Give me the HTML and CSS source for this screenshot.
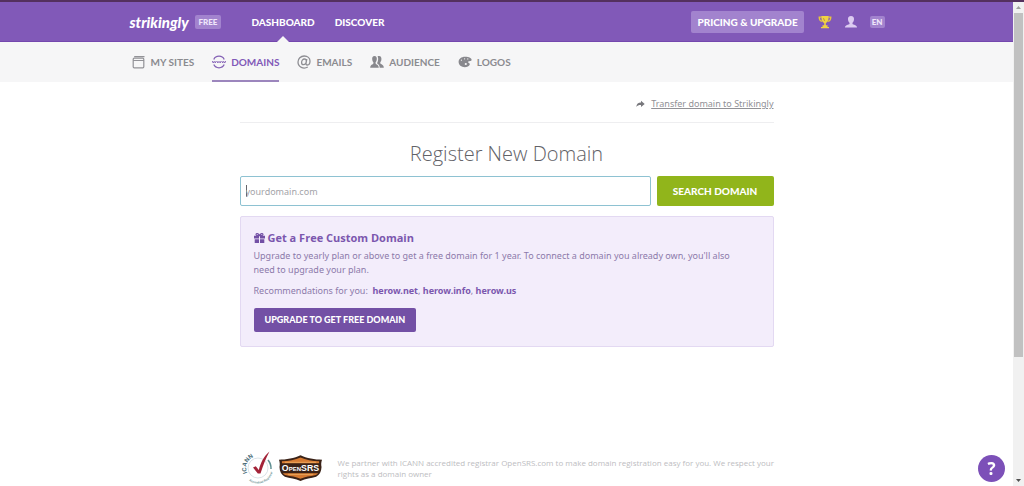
FILE: index.html
```html
<!DOCTYPE html>
<html lang="en">
<head>
<meta charset="utf-8">
<title>Strikingly - Domains</title>
<link rel="stylesheet" href="styles.css">
</head>
<body>
<div class="page">
  <header class="topbar">
    <div class="wrap topbar-row">
      <a class="brand" href="#">strikingly</a>
      <span class="tag plan">FREE</span>
      <nav class="main-nav">
        <a class="current" href="#">DASHBOARD</a>
        <a href="#">DISCOVER</a>
      </nav>
      <div class="account">
        <a class="pricing" href="#">PRICING &amp; UPGRADE</a>
        <a href="#" class="icon-link" aria-label="Rewards"><svg width="14" height="14" viewBox="0 0 14 14"><path d="M3.5 2.2H1.2c0 2.600 1.200 3.800 3 4.200M10.500 2.200h2.300c0 2.600-1.200 3.800-3 4.200" fill="none" stroke="#e8c63c" stroke-width="1.300"/><path d="M3.300 1h7.400c0 4-1 6.300-2.900 7v2.200h1.700V12H11v1.300H3V12h1.500v-1.800h1.700V8C4.300 7.300 3.300 5 3.300 1z" fill="#f0d242"/><path d="M5.500 3.200l1 2.600" stroke="#b58c45"/></svg></a>
        <a href="#" class="icon-link" aria-label="Account"><svg width="14" height="14" viewBox="0 0 14 14"><path d="M7 1C4.800 1 3.800 2.500 4 4.500c.1 1.600.8 2.700 1.500 3.300v1.300C4.800 10 1 10 1 12.500h12C13 10 9.200 10 8.500 9.100V7.800C9.200 7.200 9.900 6.100 10 4.500 10.200 2.500 9.200 1 7 1z" fill="#dccbf1"/></svg></a>
        <a class="tag lang" href="#">EN</a>
      </div>
    </div>
  </header>
  <nav class="subnav">
    <div class="wrap subnav-row">
      <a href="#"><svg width="14" height="14" viewBox="0 0 14 14"><rect x="1.200" y="3.200" width="10.600" height="9.600" rx="1" fill="none" stroke="#929297" stroke-width="1.200"/><path d="M1 5.500h11M2.200 1.600h10.300" stroke="#929297" stroke-width="1.200"/></svg>MY SITES</a>
      <a class="current" href="#"><svg width="14" height="14" viewBox="0 0 14 14" fill="none" stroke="#8461b5" stroke-width="1.300"><path d="M1.800 4.400C2.700 2.300 4.600 1.200 7 1.200s4.300 1.100 5.200 3.200M1.800 9.600C2.700 11.700 4.600 12.800 7 12.800s4.300-1.100 5.200-3.200"/><path d="M.3 6l.9 2L2.200 6.300 3.300 8l.9-2M4.900 6l.9 2L7 6.300 8.200 8l.9-2M9.800 6l.9 2 1-1.700 1.100 1.700.9-2" stroke-width=".9"/></svg>DOMAINS</a>
      <a href="#"><svg width="14" height="14" viewBox="0 0 14 14" fill="none" stroke="#8e8e93" stroke-width="1.300"><path d="M10.800 12C6.500 14.500 1 12 1 7c0-3.500 2.700-6 6.200-6C10.600 1 13 3.200 13 6c0 2.700-1.400 4-2.700 4-1.200 0-1.500-.9-1.200-2.200L9.800 4M9.300 6C9.300 4.800 8.700 4 7.500 4 5.800 4 4.600 5.700 4.600 7.500c0 1.300.7 2.200 1.800 2.200C8 9.700 9.300 8 9.300 6z"/></svg>EMAILS</a>
      <a href="#"><svg width="14" height="14" viewBox="0 0 14 14" fill="#88888d"><path d="M4.500 1C2.700 1 2 2.400 2.200 4.200c.1 1.500.7 2.500 1.200 3v1.200C3 9.500.2 9.500.2 12.700h8.600c0-3.200-2.800-3.200-3.200-4.300V7.200c.5-.5 1.100-1.500 1.200-3C7 2.400 6.300 1 4.500 1z"/><path d="M7.600 1.300C11 .3 11.600 2.700 11.400 4.400c-.1 1.300-.6 2.200-1.100 2.700v1.200c.5 1.200 3.500 1.200 3.500 4.400H9.700c0-2.500-1.200-3.400-2.400-4V7.500c.9-1.300 1.300-4.200.3-6.200z"/></svg>AUDIENCE</a>
      <a href="#"><svg width="14" height="14" viewBox="0 0 14 14"><path d="M7 1.800c4.200 0 6.800 1.300 6.600 3.300-.2 1.600-2.900.6-3.500 1.900-.4.900 2.300 1 1.600 2.700-.6 1.500-2.700 2.500-4.900 2.500C3.400 12.200.6 10 .6 7S3.300 1.800 7 1.800z" fill="#88888d"/><g fill="#f6f6f7"><circle cx="3.400" cy="5.200" r=".6"/><circle cx="6.600" cy="3.800" r=".6"/><circle cx="9.800" cy="3.900" r=".6"/><circle cx="7.800" cy="9" r="1.100"/></g></svg>LOGOS</a>
    </div>
  </nav>
  <main class="content">
    <div class="transfer">
      <svg width="9" height="8" viewBox="0 0 9 8"><path d="M.3 7C.5 3.900 2.300 2.500 5 2.500V.7L8.700 3.900 5 7V5C3 4.900 1.500 5.400.3 7z" fill="#77777c"/></svg>
      <a href="#">Transfer domain to Strikingly</a>
    </div>
    <h1>Register New Domain</h1>
    <form class="search">
      <input type="text" aria-label="Domain name" placeholder="yourdomain.com">
      <button type="button">SEARCH DOMAIN</button>
    </form>
    <section class="offer">
      <h2><svg width="11" height="10" viewBox="0 0 11 10"><path d="M0 2.800h5v2.700H0zM6 2.800h5v2.700H6zM.7 6.200H5V10H.7zM6 6.200h4.300V10H6z" fill="#7350a5"/><path d="M5.500 2.800C4.600.3 2-.1 2 1.500c0 1 1.200 1.300 3.500 1.300C6.400.3 9-.1 9 1.500c0 1-1.200 1.300-3.500 1.300z" fill="none" stroke="#7350a5" stroke-width="1.100"/></svg>Get a Free Custom Domain</h2>
      <p>Upgrade to yearly plan or above to get a free domain for 1 year. To connect a domain you already own, you'll also need to upgrade your plan.</p>
      <p class="names">Recommendations for you: &nbsp;<a href="#">herow.net</a>, <a href="#">herow.info</a>, <a href="#">herow.us</a></p>
      <button type="button">UPGRADE TO GET FREE DOMAIN</button>
    </section>
    <footer class="partners">
      <svg width="34" height="36" viewBox="0 0 34 36" role="img" aria-label="ICANN accredited registrar">
        <path id="arc-top" d="M7.200 23A12 12 0 0 1 24 7.600" fill="none"/>
        <path id="arc-low" d="M9 30.500A15 15 0 0 0 33 18" fill="none"/>
        <circle cx="18" cy="18" r="10" fill="none" stroke="#dbe3e7"/>
        <path d="M28 10a13 13 0 0 1 3 9" fill="none" stroke="#5f8f92" stroke-width="1.500"/>
        <text class="seal-name"><textPath href="#arc-top">ICANN</textPath></text>
        <text class="seal-note"><textPath href="#arc-low">Accredited Registrar</textPath></text>
        <path d="M13 17.500l2.800-1.200 3 3.800C20.500 13 23.500 6.500 29.500 1.500 26 8 23.200 15 20.500 23.500h-2.700z" fill="#a32338"/>
      </svg>
      <svg width="45" height="28" viewBox="0 0 46 28" role="img" aria-label="OpenSRS">
        <path d="M1 5.500C8 5.500 17 4 23 1c6 3 15 4.500 22 4.500-1 3-1 5-.5 7.500-.2 5-2 8-5.500 10-5 1.300-11 2-16 4.300C18 25 12 24.300 7 23c-3.500-2-5.300-5-5.500-10C2 10.500 2 8.500 1 5.500z" fill="#3a2217"/>
        <path d="M4 7.200C11 7 17.500 5.700 23 3.300c5.500 2.400 12 3.700 19 3.900v2H4zM5 19.300h36c-.8 1.200-1.800 1.800-3.200 2.200-5 1-10 1.600-14.800 3.400-4.800-1.800-9.800-2.400-14.800-3.400-1.400-.4-2.400-1-3.200-2.200z" fill="#d77b32"/>
        <path d="M7 8.200h32M10 20.500h26" stroke="#eda85c"/>
        <text class="badge-name" x="23" y="17.500" text-anchor="middle">OpenSRS</text>
      </svg>
      <p>We partner with ICANN accredited registrar OpenSRS.com to make domain registration easy for you. We respect your rights as a domain owner</p>
    </footer>
  </main>
</div>
<div class="scrollbar" aria-hidden="true">
  <svg width="11" height="11" viewBox="0 0 11 11"><path d="M3 7l2.500-3L8 7z" fill="#a0a0a0"/></svg>
  <div class="thumb"></div>
  <svg class="down" width="11" height="11" viewBox="0 0 11 11"><path d="M3 4l2.500 3L8 4z" fill="#505050"/></svg>
</div>
<button class="help" type="button" aria-label="Help">?</button>
</body>
</html>
```
FILE: styles.css
```css
* { box-sizing: border-box; }
body {
  margin: 0;
  display: flex;
  min-height: 100vh;
  background: #fff;
  color: #77777c;
  font: 9px/14px "Noto Sans", "Open Sans", sans-serif;
}
a { color: inherit; text-decoration: none; }
button, input { font: inherit; border: 0; margin: 0; }
h1, h2, p { margin: 0; }
svg { flex: none; display: block; }

.page { flex: 1; display: flex; flex-direction: column; border-top: 2px solid #54305e; }
.wrap { width: 100%; max-width: 788px; margin: 0 auto; padding: 0 16px; display: flex; }

.topbar { background: #8159b8; border-bottom: 1px solid #7447ae; color: #fff; font: 900 10px/14px Lato, sans-serif; }
.topbar-row { align-items: center; height: 39px; padding-left: 17px; }
.brand { font: italic 900 15px/20px Lato, sans-serif; width: 65px; }
.tag { background: #a283ce; border-radius: 2px; color: #efe6fa; font: 900 8px/12px Lato, sans-serif; }
.plan { padding: 1px 4px; }
.main-nav { display: flex; gap: 20px; margin-left: 30px; align-self: stretch; }
.main-nav a { display: flex; align-items: center; position: relative; }
.main-nav .current::after {
  content: "";
  position: absolute;
  left: 50%;
  bottom: -1px;
  margin-left: -6px;
  border: 6px solid transparent;
  border-top: 0;
  border-bottom-color: #f6f6f7;
}
.account { margin-left: auto; display: flex; align-items: center; }
.pricing { background: #a283ce; border-radius: 2px; padding: 4px 6px; margin-right: 14px; }
.icon-link { margin-right: 12px; }
.lang { padding: 0 2px; }

.subnav { background: #f6f6f7; color: #8b8b90; font: 700 10px/14px Lato, sans-serif; }
.subnav-row { height: 40px; gap: 18px; padding-left: 19px; }
.subnav a { display: flex; align-items: center; gap: 5px; padding-top: 2px; border-bottom: 2px solid transparent; }
.subnav .current { color: #8159b8; border-color: #9c86bd; }

.content { flex: 1; display: flex; flex-direction: column; width: 100%; max-width: 534px; margin: 0 auto; }
.transfer {
  display: flex;
  justify-content: flex-end;
  align-items: center;
  gap: 6px;
  padding: 15px 0 11px;
  border-bottom: 1px solid #eeeef0;
  color: #919196;
}
.transfer a { text-decoration: underline; }
h1 { margin: 16px 0 7px; text-align: center; font: 300 20px/30px "Open Sans", sans-serif; color: #626267; }
.search { display: flex; gap: 6px; }
.search input {
  flex: 1;
  min-width: 0;
  height: 30px;
  padding: 0 5px;
  border: 1px solid #8ec2d2;
  border-radius: 2px;
  outline: 0;
  color: #55555a;
}
.search input:placeholder-shown { background: linear-gradient(#66666b, #66666b) 5px center / 1px 12px no-repeat; }
.search input::placeholder { color: #a3a3a8; }
.search button { width: 117px; border-radius: 2px; background: #91b51b; color: #fff; font: 900 10px/14px Lato, sans-serif; }

.offer {
  margin-top: 10px;
  padding: 14px 26px 14px 13px;
  border: 1px solid #e3d9f2;
  border-radius: 2px;
  background: #f3edfb;
  color: #8c7aaa;
}
.offer h2 { display: flex; align-items: center; gap: 3px; font: 700 11px/14px "Open Sans", sans-serif; color: #7b57ae; }
.offer p { margin-top: 4px; }
.offer .names { margin-top: 7px; }
.names a { color: #7b57ae; font-weight: 700; }
.offer button {
  margin-top: 10px;
  height: 24px;
  padding: 0 11px;
  border-radius: 2px;
  background: #7350a5;
  color: #fff;
  font: 900 9px/14px Lato, sans-serif;
}

.partners { margin-top: auto; display: flex; align-items: center; gap: 4px; color: #bdbdc1; font: 8px/11px "Open Sans", sans-serif; }
.partners p { margin: 0 -4px 0 11px; }
.seal-name { font: 700 6px "Liberation Sans", sans-serif; fill: #426572; }
.seal-note { font: 700 3px "Liberation Sans", sans-serif; fill: #6c9294; }
.badge-name { font: 700 9px "Liberation Sans", sans-serif; font-variant: small-caps; fill: #fff; stroke: #3a2217; stroke-width: 2px; paint-order: stroke; }

.scrollbar { width: 11px; display: flex; flex-direction: column; background: #f1f1f1; border-top: 2px solid #54305e; }
.thumb { flex: 0 0 71%; margin: 0 1px; background: #c1c1c1; }
.down { margin-top: auto; }

.help {
  position: fixed;
  right: 19px;
  bottom: 4px;
  width: 27px;
  height: 27px;
  padding: 0;
  border-radius: 50%;
  background: #7c50b8;
  color: #fff;
  font: 700 17px/27px "Open Sans", sans-serif;
}
```
